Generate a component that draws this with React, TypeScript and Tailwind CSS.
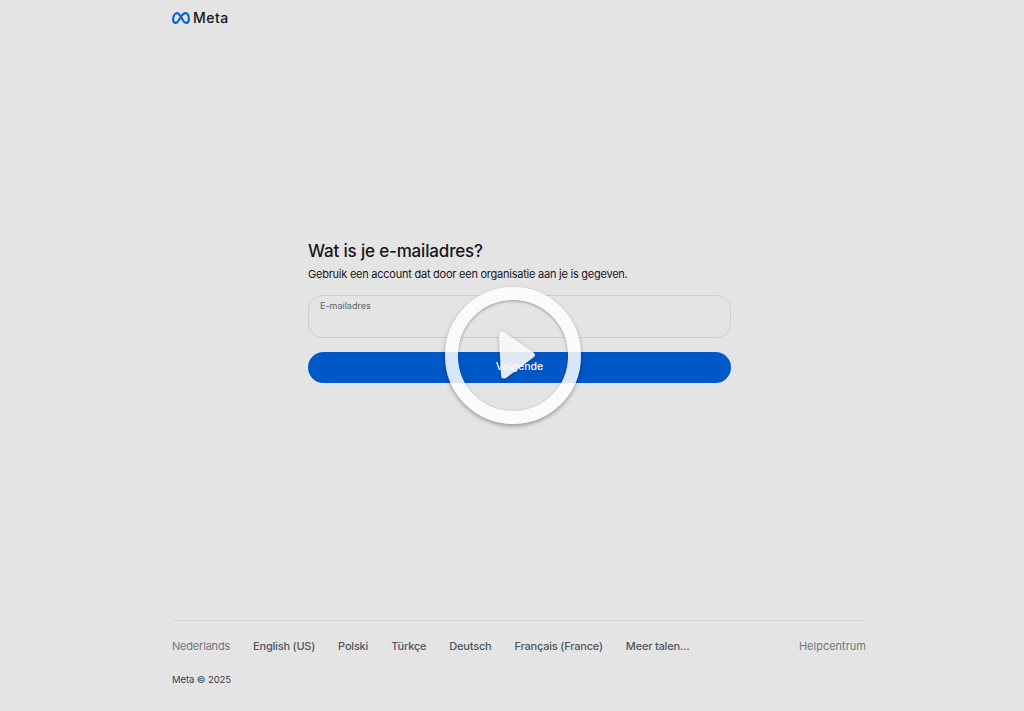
import React from 'react';

const languages = ['English (US)', 'Polski', 'Türkçe', 'Deutsch', 'Français (France)', 'Meer talen...'];

function MetaMark() {
  return (
    <svg width="18" height="12" viewBox="0 0 18 12" fill="none" className="block">
      <defs>
        <linearGradient id="metaLeft" x1="0" y1="0" x2="18" y2="12" gradientUnits="userSpaceOnUse">
          <stop offset="0" stopColor="#0668e1" />
          <stop offset="1" stopColor="#0a5bc4" />
        </linearGradient>
      </defs>
      <path
        d="M1.1 7.8C1.1 4.2 2.8 1.1 5 1.1c2.4 0 4.4 4.6 6 7.1 1 1.7 1.8 2.7 3 2.7 1.9 0 2.9-1.6 2.9-3.9 0-3.2-1.4-5.9-3.3-5.9C11.4 1.1 9.4 3.8 8 6.2 6.6 8.6 5.6 10.9 3.7 10.9 2 10.9 1.1 9.7 1.1 7.8Z"
        stroke="url(#metaLeft)"
        strokeWidth="2.1"
        strokeLinejoin="round"
      />
    </svg>
  );
}

function PlayOverlay() {
  return (
    <div className="absolute left-[445px] top-[287px] w-[136px] h-[137px] pointer-events-none">
      <div className="w-full h-full rounded-full border-[13px] border-white/85 shadow-[0_2px_4px_rgba(0,0,0,0.35),inset_0_1px_3px_rgba(0,0,0,0.35)]" />
      <svg
        width="40"
        height="54"
        viewBox="0 0 40 54"
        className="absolute left-[52px] top-[41px] drop-shadow-[0_1px_2px_rgba(0,0,0,0.25)]"
      >
        <path
          d="M7 4 L37 25 Q39 27 37 29 L9 50 Q4 52 4 47 L2 8 Q2 2 7 4Z"
          fill="#ffffff"
          fillOpacity="0.88"
        />
      </svg>
    </div>
  );
}

export default function App() {
  return (
    <div className="relative h-[711px] overflow-hidden bg-[#e4e4e4] font-['Inter','Liberation_Sans',sans-serif] text-[#14171a]">
      <div className="flex flex-col h-full w-[694px] ml-[172px]">
        {/* Header */}
        <header className="flex items-center gap-[3px] h-[35px]">
          <MetaMark />
          <span className="text-[14px] font-medium leading-none tracking-[0.45px]">Meta</span>
        </header>

        {/* Form */}
        <main className="flex-1 pt-[205px] pl-[136px]">
          <div className="w-[423px]">
            <h1 className="text-[17px] leading-[22px] font-medium tracking-[-0.17px]">Wat is je e-mailadres?</h1>
            <p className="mt-[2px] text-[11px] leading-[20px] tracking-[-0.24px]">
              Gebruik een account dat door een organisatie aan je is gegeven.
            </p>
            <div className="mt-[11px] h-[43px] rounded-[14px] border border-[#cfcfcf] px-[11px] pt-[3px]">
              <span className="block text-[9px] leading-[14px] text-[#606770]">E-mailadres</span>
            </div>
            <button className="mt-[14px] block w-full h-[31px] pb-[1px] rounded-full bg-[#0057c8] text-white text-[10.5px] font-medium">
              Volgende
            </button>
          </div>
        </main>

        {/* Footer */}
        <footer className="border-t border-[#d8d8d8] h-[91px] pt-[16px]">
          <div className="flex items-center justify-between h-[18px] text-[11px] text-[#606770]">
            <div className="flex items-center gap-[23px]">
              <span className="text-[#72777d] tracking-[-0.2px]">Nederlands</span>
              {languages.map((lang) => (
                <span key={lang} className="font-medium text-[#4f5660] tracking-[-0.2px]">
                  {lang}
                </span>
              ))}
            </div>
            <span className="text-[#72777d]">Helpcentrum</span>
          </div>
          <div className="mt-[18px] text-[9.5px] leading-[14px] text-[#3a3d42] tracking-[-0.1px]">Meta © 2025</div>
        </footer>
      </div>
      <PlayOverlay />
    </div>
  );
}
